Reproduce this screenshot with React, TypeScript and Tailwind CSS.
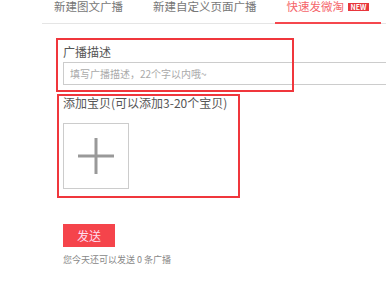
import React from 'react';

const tabs = ['新建图文广播', '新建自定义页面广播'];

const PlusIcon: React.FC = () => (
  <svg width="36" height="36" viewBox="0 0 36 36">
    <rect x="0" y="16.5" width="36" height="3" fill="#999" />
    <rect x="16.5" y="0" width="3" height="36" fill="#999" />
  </svg>
);

const App: React.FC = () => {
  return (
    <div className="relative w-[386px] h-[283px] overflow-hidden bg-white font-['Noto_Sans_CJK_SC','Noto_Sans',sans-serif]">
      {/* tabs */}
      <div className="flex gap-[6px] ml-[42px] h-[24px] border-b border-[#e5e5e5]">
        {tabs.map((t) => (
          <div key={t} className="h-[24px] -mb-px px-[12px] text-[11.5px] leading-[12px] text-[#777]">
            {t}
          </div>
        ))}
        <div className="h-[24px] -mb-px px-[12px] flex items-start gap-[4px] border-b-2 border-[#f5474e]">
          <span className="text-[11.5px] leading-[12px] text-[#f5666b]">快速发微淘</span>
          <span className="mt-[3px] w-[21px] h-[8px] bg-[#e8363c] text-white text-[7px] leading-[8px] font-bold text-center">
            NEW
          </span>
        </div>
      </div>

      {/* form */}
      <div className="pl-[63px]">
        <div className="mt-[22px] text-[12px] leading-[12px] text-[#555]">广播描述</div>
        <input
          className="mt-[4px] block w-[340px] h-[23px] border border-[#ccc] pl-[6px] text-[10px] outline-none placeholder:text-[#aaa]"
          placeholder="填写广播描述，22个字以内哦~"
        />
        <div className="mt-[12px] text-[12px] leading-[12px] text-[#555]">添加宝贝(可以添加3-20个宝贝)</div>
        <div className="mt-[14px] w-[66px] h-[66px] border border-[#ccc] flex items-center justify-center">
          <PlusIcon />
        </div>
        <button className="mt-[35px] block w-[52px] h-[23px] bg-[#f5444b] text-[#fde] text-[12px] leading-[23px]">
          发送
        </button>
        <div className="mt-[8px] text-[9px] leading-[10px] text-[#888]">您今天还可以发送 0 条广播</div>
      </div>

      {/* annotation frames */}
      <div className="absolute left-[56px] top-[38px] w-[238px] h-[54px] border-2 border-[#f0363c] pointer-events-none" />
      <div className="absolute left-[57px] top-[94px] w-[183px] h-[104px] border-2 border-[#f0363c] pointer-events-none" />
    </div>
  );
};

export default App;
